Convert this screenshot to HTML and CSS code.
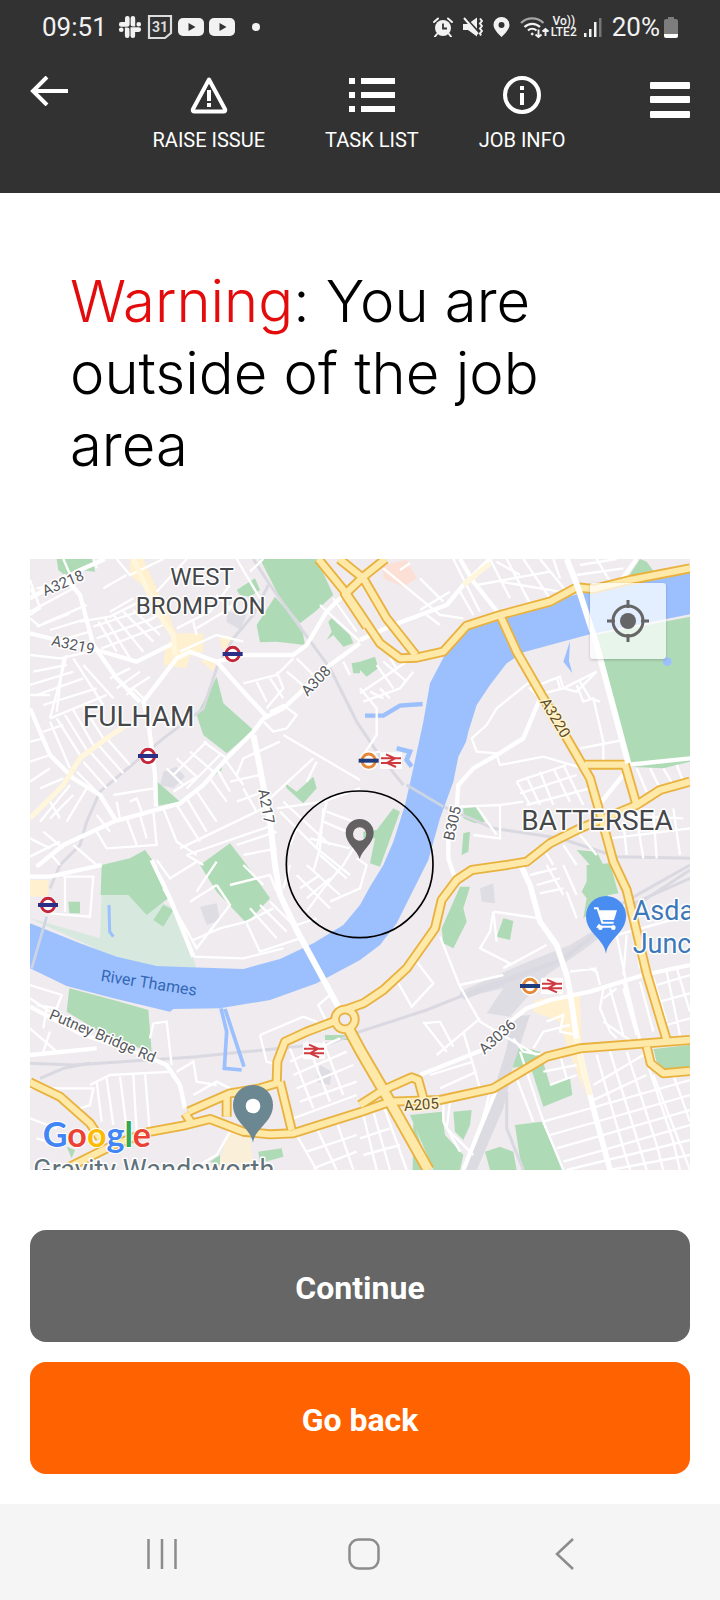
FILE: index.html
```html
<!DOCTYPE html>
<html lang="en">
<head>
<meta charset="utf-8">
<meta name="viewport" content="width=device-width, initial-scale=1">
<title>Job area warning</title>
<link rel="stylesheet" href="styles.css">
</head>
<body>
<header class="header">
  <div class="status">
    <span class="clock">09:51</span>
    <div class="notices">
      <svg width="24" height="24" viewBox="0 0 24 24" fill="none" stroke="#f2f2f2" stroke-width="4.6" stroke-linecap="round"><path d="M9.3 3.2v6M3.2 9.4h6.100M14.800 9.300h.1V3.400M20.700 9.300h.1M14.800 20.700v-6.100h6M9.300 14.700h-.1v6M3.200 14.700h.1M9.300 3.200h.1M14.800 20.700h.1"/></svg>
      <svg width="26" height="26" viewBox="0 0 26 26" fill="none" stroke="#dcdcdc" stroke-width="2.200"><path d="M2 2h22v17l-6 5H2z"/><text class="day" x="13" y="18" text-anchor="middle">31</text></svg>
      <svg width="26" height="20" viewBox="0 0 26 20"><rect y="1" width="26" height="18" rx="5" fill="#f2f2f2"/><path d="M10.500 6l7 4-7 4z" fill="#323232"/></svg>
      <svg width="26" height="20" viewBox="0 0 26 20"><rect y="1" width="26" height="18" rx="5" fill="#f2f2f2"/><path d="M10.500 6l7 4-7 4z" fill="#323232"/></svg>
      <span class="more-dot"></span>
    </div>
    <div class="system">
      <svg width="20" height="20" viewBox="0 0 20 20"><circle cx="10" cy="11" r="8" fill="#f2f2f2"/><path d="M10 6.500V11.500h4" fill="none" stroke="#323232" stroke-width="1.800"/><path d="M1 5l4-3.500M19 5l-4-3.500M4 17l-2 2.500M16 17l2 2.500" stroke="#f2f2f2" stroke-width="2" stroke-linecap="round"/></svg>
      <svg width="20" height="20" viewBox="0 0 20 20"><path d="M0 7h5l9-6.500v19L5 13H0z" fill="#f2f2f2"/><path d="M0 -1.500l15 16" stroke="#323232" stroke-width="2.500"/><path d="M1 1l14 16M17 1.500l2 2.500-2 2.500 2 2.500-2 2.500 2 2.500-2 2.500 1 2" fill="none" stroke="#f2f2f2" stroke-width="2"/></svg>
      <svg width="17" height="20" viewBox="0 0 17 20"><path fill-rule="evenodd" fill="#f2f2f2" d="M8.500 0a8 8 0 0 1 8 8c0 5-8 12-8 12S.5 13 .5 8a8 8 0 0 1 8-8zm0 5a3 3 0 1 0 0 6 3 3 0 0 0 0-6z"/></svg>
      <svg width="29" height="22" viewBox="0 0 29 22" fill="none" stroke="#f2f2f2" stroke-width="2.200"><path d="M1 7a16 16 0 0 1 22.500 0" stroke="#a5a5a5"/><path d="M4.500 11a11 11 0 0 1 15.500 0M8 14.500a6 6 0 0 1 8.500 0"/><circle cx="12.200" cy="18" r="1" fill="#f2f2f2" stroke-width="1"/><path d="M18.500 13.500v7.500m-3-2.500l3 2.500 3-2.500M25.500 20v-7m-3 2.500l3-2.500 3 2.500" stroke-width="1.900"/></svg>
      <span class="volte"><span>Vo))</span><span>LTE2</span></span>
      <svg width="19" height="20" viewBox="0 0 19 20"><path d="M1 16h2.500v4H1zM6 12h2.500v8H6zM11 5h2.500v15H11z" fill="#f2f2f2"/><path d="M16 1h2.500v19H16z" fill="#757575"/></svg>
      <span class="percent">20%</span>
      <svg width="14" height="21" viewBox="0 0 14 21"><path d="M4 0h6v2h2a2 2 0 0 1 2 2v13H0V4a2 2 0 0 1 2-2h2z" fill="#7d7d7d"/><path d="M0 17h14v2a2 2 0 0 1-2 2H2a2 2 0 0 1-2-2z" fill="#fff"/></svg>
    </div>
  </div>
  <nav class="toolbar">
    <button class="tool back" aria-label="Back"><svg width="38" height="30" viewBox="0 0 38 30" fill="none" stroke="#fff" stroke-width="4"><path d="M38 15H4M17 1L3 15l14 14"/></svg></button>
    <div class="tools">
      <button class="tool"><svg width="38" height="38" viewBox="0 0 38 38" fill="none" stroke="#fff"><path d="M19 3.500L2.800 33.500q-.3 2 1.500 2h29.400q1.800 0 1.500-2z" stroke-width="4" stroke-linejoin="round"/><path d="M19 14v11M19 27v4" stroke-width="4"/></svg><span>RAISE ISSUE</span></button>
      <button class="tool"><svg width="46" height="38" viewBox="0 0 46 38" fill="#fff"><path d="M0 2h6v6H0zM12 2h34v6H12zM0 16h6v6H0zM12 16h34v6H12zM0 30h6v6H0zM12 30h34v6H12z"/></svg><span>TASK LIST</span></button>
      <button class="tool"><svg width="38" height="38" viewBox="0 0 38 38" fill="none" stroke="#fff" stroke-width="4"><circle cx="19" cy="19" r="17"/><path d="M19 17v12M19 10v4"/></svg><span>JOB INFO</span></button>
    </div>
    <button class="tool menu" aria-label="Menu"><svg width="40" height="36" viewBox="0 0 40 36" fill="#fff"><rect width="40" height="7" rx="1"/><rect y="14" width="40" height="7" rx="1"/><rect y="29" width="40" height="7" rx="1"/></svg></button>
  </nav>
</header>

<main class="content">
  <h1 class="title"><span class="alert">Warning</span>: You are outside of the job area</h1>

  <div class="map">
    <svg class="map-art" viewBox="0 12 1980 1833" role="img" aria-label="Map of the job area">
      <defs>
        <g id="tube"><circle r="27" fill="#fff"/><circle r="20" fill="#fff" stroke="#c2263b" stroke-width="9"/><rect x="-30" y="-6" width="60" height="12" fill="#2b2f86"/></g>
        <g id="overground"><circle r="29" fill="#fff"/><circle r="20" fill="#fff" stroke="#e5883a" stroke-width="9"/><rect x="-30" y="-6" width="60" height="12" fill="#1f3b7b"/></g>
        <g id="rail"><rect x="-33" y="-25" width="66" height="50" rx="4" fill="#fff" opacity=".85"/><path d="M-30 -7H30M-30 7H30M-15 -19L12 -7L-12 7L15 19" fill="none" stroke="#cf3a40" stroke-width="6"/></g>
        <path id="embankment" d="M865 12L945 110L990 175L1050 265L1110 310L1160 308L1240 290L1310 212L1410 180L1560 140L1640 97L1690 102L1800 75L1980 40"/>
        <g id="arterials">
          <use href="#embankment"/>
          <path d="M928 12L1000 70L1070 190L1157 300M1066 12L1000 65L945 118L1010 215"/>
          <path d="M1410 180L1460 290L1535 420L1640 600L1680 670L1700 740L1720 810L1750 920L1790 1005L1850 1255L1910 1455"/>
          <path d="M1665 629H1785L1820 750"/>
          <path d="M1980 680L1890 705L1820 750L1650 820L1560 865L1490 920L1430 930L1325 945L1280 975L1235 1035L1215 1120L1130 1240L1060 1305L1000 1345L945 1365"/>
          <path d="M910 1400L830 1430L765 1460L742 1520L740 1585L690 1600L600 1615L475 1670M590 1620V1685M465 1675L485 1705M750 1580L785 1725"/>
          <path d="M350 1732L460 1712L540 1692L640 1730L720 1738L790 1735L990 1672L1080 1640L1230 1635L1390 1600L1550 1505L1650 1480L1980 1455"/>
          <path d="M990 1650L1060 1605L1145 1567L1165 1575L1180 1630"/>
          <path d="M1850 1475L1862 1525L1900 1555L1980 1548"/>
          <path d="M0 1582L90 1625L180 1705L210 1750M100 1845L240 1775L350 1732"/>
        </g>
      </defs>
      <rect y="12" width="1980" height="1833" fill="#efebee"/>

      <g fill="#fff1cf">
        <path d="M440 235L520 235L520 290L480 300L470 340L400 330L405 280Z"/>
        <path d="M300 12L340 12L420 190L440 240L410 225L360 110L300 60Z"/>
        <path d="M570 250L600 240L605 285L575 280ZM510 315L560 315L550 350ZM0 975H55V1025H0Z"/>
        <path d="M1515 1335L1650 1315L1660 1620L1680 1720L1655 1590L1610 1470L1590 1400L1510 1370Z"/>
        <path d="M600 1720L660 1735L670 1845H560Z" opacity=".7"/>
      </g>
      <path d="M1060 30L1130 15L1160 70L1120 95L1060 70Z" fill="#fce0d5"/>
      <g fill="#dfdde4">
        <path d="M400 650L440 635L465 665L430 700L390 690ZM590 170L650 180L630 225L590 200ZM510 1055L560 1045L570 1095L530 1110ZM1350 1000L1390 985L1395 1045L1355 1040ZM870 1530L905 1550L900 1590L860 1580Z"/>
      </g>

      <path fill="#d7e8de" d="M0 1090L210 1150L215 1015L340 1015L430 1060L495 1225L500 1245L380 1240L250 1205Z"/>
      <g fill="#aedbb6">
        <path d="M80 12H190L195 50L150 45L110 65L85 45ZM690 12H860L910 120L855 170L810 205L750 130ZM620 105L675 70L690 105L660 125L630 120ZM735 125L815 215L825 270L740 260L690 262L680 210Z"/>
        <path d="M560 365L580 445L670 525L590 595L520 540L500 480ZM580 615L575 645L530 680L520 690ZM382 680L450 740L385 752ZM895 200L905 190L960 240L970 265L940 275L910 240L890 255L905 230ZM765 685L800 710L850 665L860 700L820 745L770 700ZM965 325L990 320V355H970Z"/>
        <path d="M215 930L300 910L345 885L385 940L420 1025L350 1080L295 1020L212 1020ZM510 930L600 865L650 930L720 1030L650 1105L560 1010ZM400 1050L430 1065L400 1115L370 1095ZM115 1040H150V1075H118ZM118 1300L250 1335L355 1365L365 1490L250 1455L110 1370Z"/>
        <path d="M1980 185L1695 240L1795 635L1900 640L1980 620ZM1795 65L1830 12L1850 20L1880 60ZM990 320L1035 305L1045 340L1010 365L990 345ZM1090 760L1110 770L1050 935L1020 925L1035 850L1000 850L1000 830L1040 825ZM1300 760L1340 755L1365 800L1335 805L1300 790ZM1300 835L1320 830L1315 890L1295 900ZM1640 885L1700 890L1720 930H1680Z"/>
        <path d="M1290 995L1320 995L1300 1060L1310 1100L1270 1180L1240 1165L1235 1120ZM1420 1090L1450 1098L1440 1155L1400 1145ZM1670 930L1740 925L1765 1015L1735 1020L1700 1060L1660 1090L1670 1030L1655 1010L1670 980ZM1870 1482L1980 1470V1540L1900 1542L1880 1520Z"/>
        <path d="M1450 1470L1530 1490L1560 1590L1620 1570L1627 1620L1540 1655L1500 1530L1440 1540ZM1140 1680L1235 1670L1245 1740L1300 1800L1290 1845H1210ZM1270 1670L1325 1665L1320 1710L1300 1755L1275 1730ZM1150 1700L1200 1845H1148ZM1365 1790L1410 1775L1450 1790L1460 1845H1380ZM1455 1710L1535 1700L1600 1845H1475Z"/>
        <path d="M885 1440H960L965 1455H885ZM685 1790L755 1780L760 1805L690 1825ZM110 1775L135 1785L125 1810ZM540 1820L570 1800V1830Z"/>
      </g>

      <g fill="#dcdbe2">
        <path d="M1290 1310L1470 1230L1620 1170L1760 1085L1820 1040L1830 1055L1660 1185L1550 1260L1440 1385L1370 1375L1420 1300L1290 1330Z" opacity=".85"/>
        <path d="M1445 1385L1500 1380L1450 1530L1420 1660L1340 1845H1300L1390 1610L1430 1480Z"/>
      </g>
      <g class="railway">
        <path d="M670 12L720 90L820 230L900 340L980 500L1040 590L1120 690"/>
        <path d="M715 90L670 180L610 250L560 340L520 460L400 550L210 710L170 800L150 870L90 930L60 1000"/>
        <path d="M0 1525L130 1530L500 1505L600 1495L900 1465L990 1430L1190 1365L1390 1285L1590 1215L1790 1070L1980 945"/>
        <path d="M1240 755L1390 820L1590 850L1760 905L1980 910M1750 1060L1980 930M1300 1330L1600 1215L1800 1050L1980 970M1430 1610V1720L1480 1845M30 1570L100 1540L180 1525"/>
      </g>

      <path fill="#9cc0fe" d="M1980 50L1680 100L1640 118L1430 185L1320 210L1260 270L1200 385L1180 500L1150 640L1125 750L1090 860L1060 930L1020 995L990 1050L940 1110L850 1165L750 1212L640 1242L480 1237L380 1233L260 1205L150 1165L0 1105V1240L110 1293L250 1330L420 1370L430 1362L570 1360L720 1335L860 1285L990 1215L1050 1170L1100 1105L1195 915L1230 790L1270 680L1285 605L1308 560L1315 530L1340 450L1380 390L1430 325L1480 292L1680 238L1980 178Z"/>
      <g fill="none" stroke="#9cc0fe">
        <path d="M1005 482H1060L1110 452L1178 447" stroke-width="13"/>
        <path d="M573 1360L590 1430L583 1540L635 1545M585 1362L642 1535" stroke-width="11"/>
        <path d="M237 1050L239 1130L250 1145" stroke-width="9"/>
        <path d="M1100 580L1140 590L1130 615L1145 635" stroke-width="14"/>
      </g>
      <path d="M1620 258L1600 320L1627 354L1617 318Z" fill="#9cc0fe"/>
      <circle cx="1912" cy="320" r="13" fill="#9cc0fe"/>

      <g class="lane">
        <path d="M0 75L30 160L0 180M20 215L120 175M0 170L130 100M40 205L170 150M20 100L130 80M30 215L0 190M60 225L175 190M100 12L125 70M75 260L180 230M0 100L15 125"/>
        <path d="M190 215L340 165M205 200L260 290M225 190L300 310M250 180L340 290M280 170L370 260M310 165L390 240M200 250L370 190M215 280L400 210M150 200L240 185L350 130M190 12L200 40"/>
        <path d="M0 300L90 310L180 290M10 350L110 330M0 390L130 350M20 420L160 370M40 450L200 400M60 490L230 420M100 310L80 470M130 310L220 450M160 330L250 430M110 300L60 490M0 420L60 420M240 370L300 340M260 400L330 350M290 410L360 365"/>
        <path d="M60 500L120 640M80 490L150 600M105 480L170 585M130 465L190 570M160 455L220 550M40 530L100 510M0 560L40 550M0 620L60 600M30 700L100 670M0 680L60 640"/>
        <path d="M180 590L260 680M205 570L280 655M230 550L300 630M160 620L230 700M140 650L210 720M290 420L310 400L340 430"/>
        <path d="M440 610L500 665L430 710M480 590L550 650M520 560L590 610M430 660L530 560M470 700L570 600M410 640L460 690M250 720L370 700M300 740L320 730L335 770M260 740L270 790M200 780L240 830M130 720L60 790M170 700L110 800M120 690L30 800M60 740L90 790M0 850L60 880M40 830L100 880"/>
        <path d="M500 220L600 160L620 130M440 220L540 170L600 90M450 290L560 240L640 260M490 200L500 240M560 120L600 160M620 12L690 130M700 12L660 50M220 100L290 60M240 170L310 130M350 200L400 170M260 12L300 60L400 12M380 110L470 12"/>
        <path d="M640 385L740 360L790 310M680 380L710 440M720 370L760 430M770 350L830 400M740 350L760 400L710 460M800 310L850 360M720 470L760 450L800 480L770 520L730 530L700 500M760 540L990 675M850 610L720 730M940 320L960 360M870 150L990 260M910 130L980 230M860 620L830 680M750 560L640 610L620 660M990 700L880 740L740 760"/>
        <path d="M560 640L600 710M590 620L640 690M540 670L590 740M500 710L560 800M470 730L530 830M440 750L510 860M600 680L690 660M620 740L700 710M640 700L680 770M450 880L700 760M470 900L730 810M400 760L440 860L500 900M330 780L350 850M290 790L320 870M200 830L230 880L380 870L370 770M0 905L90 860M60 895L90 930M130 870L200 930M620 870L740 830M640 900L740 880"/>
        <path d="M750 770L860 880L960 960M760 740L900 870M800 820L780 870M840 850L960 880M880 760L870 880L850 950M890 770L970 800M880 800L950 830M890 740L860 880M970 880L940 930L880 1000L830 1070M800 960L900 1060M830 930L930 1020M870 900L950 970M780 930L760 1000M980 910L1010 930L990 1000L900 1040M860 1090L800 1110M810 1000L870 960M830 1030L900 970"/>
        <path d="M500 920L420 970L380 915M470 900L520 930M560 920L500 1010M400 1000L500 1180L600 1050L560 990M480 1040L560 990M490 1155L570 1120L650 1100L730 1060M660 1060L740 1150M690 1050L770 1130M720 1040L790 1110M650 1105L690 1190L810 1150M490 1205L640 1210L760 1180M600 990L720 960L740 1010M640 930L700 990M100 965H190L180 1085L60 1075M105 965V1070"/>
        <path d="M0 1290L95 1320L80 1360L20 1350M0 1330L60 1370M50 1360L40 1420M370 1405L410 1400L425 1530M360 1450L370 1405M0 1420L80 1490M60 1430L40 1490M440 1550L490 1520L500 1580L560 1590M490 1620L560 1580L600 1600M180 1590L240 1560L430 1550M200 1580L215 1700M230 1570L250 1710M270 1565L290 1720M310 1560L320 1730M345 1555L360 1740M0 1600H190L180 1650L120 1670M0 1690L80 1720M20 1750L90 1770"/>
        <path d="M690 1440L820 1385L860 1400L880 1430M690 1440L710 1520L740 1530M930 1370L900 1320L865 1350L890 1400M780 1520L930 1450M790 1560L950 1490M800 1600L970 1530M810 1640L980 1580M790 1690L980 1620M780 1480L850 1660M830 1460L900 1640M880 1460L940 1620M800 1740L860 1845M860 1720L920 1845M920 1700L970 1845M830 1790L980 1740M850 1840L980 1790M600 1730L560 1800L480 1845"/>
        <path d="M1060 40L1230 180L1300 190M1170 70L1240 140M1110 45L1140 25M1270 12L1350 170M1380 12L1440 130M1430 12L1500 145M1480 12L1560 130M1530 12L1610 110M1340 90L1560 50M1410 80L1590 110M1170 165L1260 110M1190 180L1230 210M1290 110L1330 180M1400 20L1470 60M1570 12L1590 70M1650 30L1760 12M1640 60L1780 40M1700 12L1740 80"/>
        <path d="M990 415L1130 320L1200 300M1000 440L1110 400L1150 350M1040 330L1090 400M1060 320L1130 380M1020 410L1060 430M990 400L1040 460L1040 540L1000 600L1050 590M1050 400L1080 430M1080 310L1100 340"/>
        <path d="M1530 430L1500 400L1590 365L1600 400L1640 410L1700 350M1520 420L1600 400L1700 350M1650 380L1680 430L1710 440M1640 390L1660 440L1690 430L1720 560L1720 620M1650 580L1780 555M1500 380L1400 460L1370 510L1325 550L1340 590L1400 595M1400 600L1410 630L1540 605L1660 640M1580 365L1590 400"/>
        <path d="M1460 680L1610 630M1470 715L1640 660M1490 750L1680 700M1460 680L1500 750M1490 665L1530 750M1530 650L1570 750M1570 640L1620 740M1600 630L1660 750M1290 755L1410 750V850L1330 840M1410 750L1480 740M1340 755L1400 840M1540 880L1570 930M1600 870L1640 930M1650 840L1700 900M1740 780L1960 790M1780 800L1790 900M1820 790L1840 910M1870 770L1880 910M1930 760L1950 900M1740 850L1980 820M1820 640L1850 710M1860 640L1890 700M1900 640L1930 690M1940 630L1960 680"/>
        <path d="M1230 1145L1290 1295L1350 1400L1520 1500M1160 1220L1210 1285L1145 1355L1100 1275M1390 1070L1530 1090M1390 1070L1380 1130L1350 1180L1440 1225L1420 1240L1550 1170M1390 1070L1400 1160M1500 960L1580 940M1520 990L1590 970M1530 1015L1600 1000M1550 930L1600 1020M1600 930L1640 1020M1610 1010L1640 1090M1290 1290L1420 1260"/>
        <path d="M1180 1405L1230 1400L1270 1475M1180 1400L1250 1490M1300 1430L1350 1600M1220 1500L1350 1390M1200 1560L1330 1520M1230 1600L1340 1550M1510 1480L1540 1430L1620 1410M1550 1400L1600 1380L1590 1430L1640 1440M1470 1490L1540 1700L1600 1845M1450 1450L1480 1490L1540 1500M1590 1500L1610 1570M1540 1550L1640 1530M1560 1590L1640 1560M1680 1240L1700 1250L1710 1290M1620 1250L1700 1240"/>
        <path d="M1760 1140L1790 1290L1830 1460M1790 1140L1780 1260M1810 1080L1830 1240M1760 1140L1980 1080M1720 1300L1710 1360L1740 1430L1760 1450M1740 1300L1780 1440M1780 1300L1820 1440M1830 1280L1870 1430M1870 1270L1910 1400M1910 1250L1950 1440M1940 1240L1980 1370M1780 1280L1830 1450M1720 1330L1760 1300M1880 1290L1980 1260M1890 1340L1980 1315M1910 1410L1980 1390M1720 1400L1820 1470"/>
        <path d="M1540 1700L1980 1575M1560 1740L1980 1620M1580 1780L1980 1665M1600 1820L1980 1710M1610 1845L1980 1755M1740 1845L1980 1800M1690 1590L1840 1500M1680 1640L1850 1560M1700 1500L1780 1780L1800 1845M1740 1490L1830 1780L1850 1845M1790 1490L1880 1770L1900 1845M1840 1490L1930 1760L1950 1845M1870 1560L1980 1845M1930 1560L1980 1700"/>
        <path d="M1240 1640L1240 1700L1290 1790M1260 1640L1250 1720L1330 1800M1380 1610L1350 1720L1300 1845M1460 1570L1510 1700M1080 1640L1110 1710M1000 1680L1040 1845M1030 1670L1080 1845M1060 1650L1130 1845M990 1750L1080 1720M1000 1800L1110 1770"/>
      </g>

      <g class="street">
        <path d="M990 265L900 330L760 460L700 490L670 530L590 610L520 690L450 745L250 800L100 870L20 935"/>
        <path d="M990 60L945 115L890 170L830 270L790 300L640 300L560 320L480 290L440 310L340 440L355 500L375 660L378 755"/>
        <path d="M560 320L640 410L715 490M0 130L150 45L225 12M100 60L150 120L190 270L260 370L330 440M0 235L80 255L200 285L320 320L430 265M0 460L60 600L130 670L210 720L260 800"/>
        <path d="M990 255L1090 210L1250 150L1300 90L1380 12M1290 12L1330 80L1410 180M1770 80L1820 12M1795 640L1715 740"/>
        <path d="M1530 430L1480 550L1400 600L1330 640L1285 690L1280 760L1255 820L1255 910L1275 970M1790 630L1980 610"/>
        <path d="M1465 915L1500 990L1530 1100L1580 1170L1610 1260L1620 1310L1640 1450L1660 1540L1690 1660L1740 1845" stroke-width="17"/>
        <path d="M1980 1230L1840 1260L1680 1310L1560 1335L1490 1360L1440 1400L1370 1480L1170 1560M1400 1600L1350 1720L1300 1845M365 915L420 1030L490 1205M0 965L60 965L215 930M0 1355L150 1435L340 1500L410 1530L450 1590L465 1660M0 1500L200 1480"/>
        <path d="M670 540L690 640L720 800L735 930L750 1020L800 1125L930 1365" class="bridge"/>
      </g>
      <path d="M310 12L350 100L400 200L430 240L435 300M0 790L100 690L150 610L230 550L290 510M1300 90L1380 25M1640 1450L1680 1620" fill="none" stroke="#fff6dc" stroke-width="15"/>

      <path d="M5 1240L50 1085M1130 690L1240 755" fill="none" stroke="#cdd4e4" stroke-width="8"/>

      <use href="#arterials" class="arterial-edge"/>
      <path class="arterial-edge wide-edge" d="M950 1410L990 1485L1060 1605L1195 1845"/>
      <circle cx="945" cy="1393" r="29" class="arterial-edge"/>
      <use href="#arterials" class="arterial-fill"/>
      <path class="arterial-fill wide-fill" d="M950 1410L990 1485L1060 1605L1195 1845"/>
      <circle cx="945" cy="1393" r="29" class="arterial-fill"/>
      <circle cx="945" cy="1393" r="18" fill="#efebee" stroke="#e9b23f" stroke-width="5"/>
      <path class="street bridge" d="M1610 12L1645 100L1700 270L1795 625"/>

      <use href="#tube" x="608" y="297"/>
      <use href="#tube" x="354" y="603"/>
      <use href="#tube" x="54" y="1050"/>
      <use href="#overground" x="1016" y="617"/>
      <use href="#rail" x="1083" y="617"/>
      <use href="#overground" x="1500" y="1293"/>
      <use href="#rail" x="1566" y="1293"/>
      <use href="#rail" x="852" y="1488"/>

      <path d="M1728 1196C1722 1150 1668 1135 1668 1083A60 60 0 0 1 1788 1083C1788 1135 1734 1150 1728 1196Z" fill="#4a8df0"/>
      <path d="M1692 1060H1703L1717 1103H1751M1709 1108L1704 1115H1754" fill="none" stroke="#fff" stroke-width="6"/>
      <path d="M1706 1066H1761L1752 1095H1716Z" fill="#fff"/><circle cx="1711" cy="1118" r="7" fill="#fff"/><circle cx="1750" cy="1118" r="7" fill="#fff"/>
      <path d="M669 1763C663 1720 609 1702 609 1650A60 60 0 0 1 729 1650C729 1702 675 1720 669 1763Z" fill="#6b8791"/>
      <circle cx="669" cy="1653" r="22" fill="#fff"/>

      <g class="labels" text-anchor="middle">
        <g class="district small"><text x="516" y="89">WEST</text><text x="512" y="176">BROMPTON</text></g>
        <g class="district"><text x="326" y="514">FULHAM</text><text x="1701" y="825">BATTERSEA</text></g>
        <g class="road">
          <text transform="translate(105 98) rotate(-23)">A3218</text>
          <text transform="translate(126 284) rotate(12)">A3219</text>
          <text transform="translate(869 388) rotate(-46)">A308</text>
          <text transform="translate(694 757) rotate(80)">A217</text>
          <text class="on-yellow" transform="translate(1563 496) rotate(59)">A3220</text>
          <text transform="translate(1282 808) rotate(-77)">B305</text>
          <text transform="translate(1412 1456) rotate(-42)">A3036</text>
          <text class="on-yellow" transform="translate(1175 1664) rotate(-4)">A205</text>
          <text transform="translate(212 1457) rotate(23)">Putney Bridge Rd</text>
        </g>
        <text class="water-name" transform="translate(354 1300) rotate(9)">River Thames</text>
      </g>
      <g class="place"><text class="shop" x="1808" y="1094">Asda</text><text class="shop" x="1808" y="1193">Junc</text><text class="site" x="10" y="1873">Gravity Wandsworth</text></g>
      <text class="brand" x="38" y="1775"><tspan fill="#4285f4">G</tspan><tspan fill="#ea4335">o</tspan><tspan fill="#fbbc05">o</tspan><tspan fill="#4285f4">g</tspan><tspan fill="#34a853">l</tspan><tspan fill="#ea4335">e</tspan></text>

      <circle cx="989" cy="928" r="220" fill="none" stroke="#000" stroke-width="5"/>
      <path d="M989 912C982 885 947 865 947 834A42 42 0 0 1 1031 834C1031 865 996 885 989 912ZM989 817A20 20 0 1 0 989 857A20 20 0 1 0 989 817Z" fill="#646163" fill-rule="evenodd"/>
    </svg>
    <button class="locate" aria-label="Show my location"><svg width="42" height="42" viewBox="0 0 42 42" fill="none" stroke="#666" stroke-width="3"><circle cx="21" cy="21" r="15"/><circle cx="21" cy="21" r="8" fill="#666" stroke="none"/><path d="M21 0v8M21 34v8M0 21h8M34 21h8"/></svg></button>
  </div>

  <div class="actions">
    <button class="action continue">Continue</button>
    <button class="action go-back">Go back</button>
  </div>
</main>

<footer class="system-nav">
  <button aria-label="Recent apps"><svg width="30" height="32" viewBox="0 0 30 32" stroke="#8c8c8c" stroke-width="2.500"><path d="M1.500 1v30M15 1v30M28.500 1v30"/></svg></button>
  <button aria-label="Home"><svg width="32" height="32" viewBox="0 0 32 32" fill="none" stroke="#8c8c8c" stroke-width="2.500"><rect x="1.500" y="1.500" width="29" height="29" rx="9"/></svg></button>
  <button aria-label="Back"><svg width="20" height="32" viewBox="0 0 20 32" fill="none" stroke="#8c8c8c" stroke-width="2.500"><path d="M18 1L2 16l16 15"/></svg></button>
</footer>
</body>
</html>
```
FILE: styles.css
```css
* { box-sizing: border-box; }

body {
  margin: 0;
  min-height: 100vh;
  display: flex;
  flex-direction: column;
  background: #fff;
  color: #000;
  font-family: Roboto, "Liberation Sans", sans-serif;
}

button {
  margin: 0;
  padding: 0;
  border: 0;
  background: none;
  color: inherit;
  font: inherit;
  cursor: pointer;
}

svg { display: block; flex: none; }

.header {
  padding-bottom: 41px;
  background: #323232;
  color: #fff;
}

.status {
  display: flex;
  align-items: center;
  height: 54px;
  padding: 0 42px;
  color: #f2f2f2;
  font-size: 26px;
  line-height: 32px;
}

.notices {
  display: flex;
  align-items: center;
  gap: 5px;
  margin-left: 11px;
}

.day {
  fill: #dcdcdc;
  stroke: none;
  font-size: 14px;
  font-weight: 700;
}

.more-dot {
  width: 8px;
  height: 8px;
  margin-left: 12px;
  border-radius: 50%;
  background: #f2f2f2;
}

.system {
  display: flex;
  align-items: center;
  gap: 10px;
  margin-left: auto;
}

.volte {
  display: flex;
  flex-direction: column;
  align-items: center;
  margin: 0 -4px 0 -8px;
  font-size: 12px;
  font-weight: 500;
  line-height: 11px;
}

.percent { margin-right: -6px; }

.toolbar {
  display: flex;
  justify-content: space-between;
  align-items: flex-start;
  padding: 22px 30px 0;
}

.tools { display: flex; gap: 60px; }

.tool {
  display: flex;
  flex-direction: column;
  align-items: center;
  gap: 14px;
  font-size: 20px;
  line-height: 24px;
}

.menu { padding-top: 6px; }

.content {
  flex: 1;
  padding: 72px 30px 30px;
}

.title {
  margin: 0;
  padding: 0 40px 78px;
  font-family: Inter, Roboto, sans-serif;
  font-size: 58px;
  font-weight: 300;
  line-height: 72px;
}

.alert { color: #e30b0b; }

.map {
  position: relative;
  overflow: hidden;
}

.map-art { width: 100%; height: auto; }

.lane { fill: none; stroke: #fff; stroke-width: 7; }
.street { fill: none; stroke: #fff; stroke-width: 13; stroke-linejoin: round; }
.bridge { stroke-width: 18; }
.railway { fill: none; stroke: #dad9e1; stroke-width: 9; }

.arterial-edge { fill: none; stroke: #e9b23f; stroke-width: 30; stroke-linejoin: round; }
.arterial-fill { fill: none; stroke: #fee9a8; stroke-width: 19; stroke-linejoin: round; }
.wide-edge { stroke-width: 38; }
.wide-fill { stroke-width: 27; }

.labels text,
.place text {
  paint-order: stroke;
  stroke: #fff;
  stroke-width: 9;
  stroke-linejoin: round;
}

.district { fill: #45474a; font-size: 84px; }
.district.small { font-size: 72px; }
.road { fill: #56585c; font-size: 45px; }
.labels .on-yellow { fill: #5c4d28; stroke: #fff3cd; }
.labels .water-name { fill: #3467b4; stroke: none; font-size: 48px; }
.shop { fill: #3d78b8; font-size: 81px; }
.site { fill: #60717a; font-size: 81px; }

.brand {
  paint-order: stroke;
  stroke: #fff;
  stroke-width: 6;
  font-family: Lato, sans-serif;
  font-size: 102px;
  font-weight: 700;
}

.locate {
  position: absolute;
  top: 24px;
  right: 24px;
  display: grid;
  place-items: center;
  width: 76px;
  height: 76px;
  border-radius: 3px;
  background: rgba(255, 255, 255, 0.72);
  box-shadow: 0 1px 3px rgba(0, 0, 0, 0.2);
}

.actions {
  display: flex;
  flex-direction: column;
  gap: 20px;
  padding-top: 60px;
}

.action {
  height: 112px;
  padding-top: 4px;
  border-radius: 16px;
  color: #fff;
  font-size: 32px;
  font-weight: 700;
  line-height: 40px;
}

.continue { background: #666; }
.go-back { background: #ff6200; }

.system-nav {
  display: flex;
  justify-content: space-between;
  align-items: center;
  height: 96px;
  padding: 4px 135px 0 142px;
  background: #f5f5f5;
}

.system-nav button {
  display: grid;
  place-items: center;
  width: 40px;
}
```
